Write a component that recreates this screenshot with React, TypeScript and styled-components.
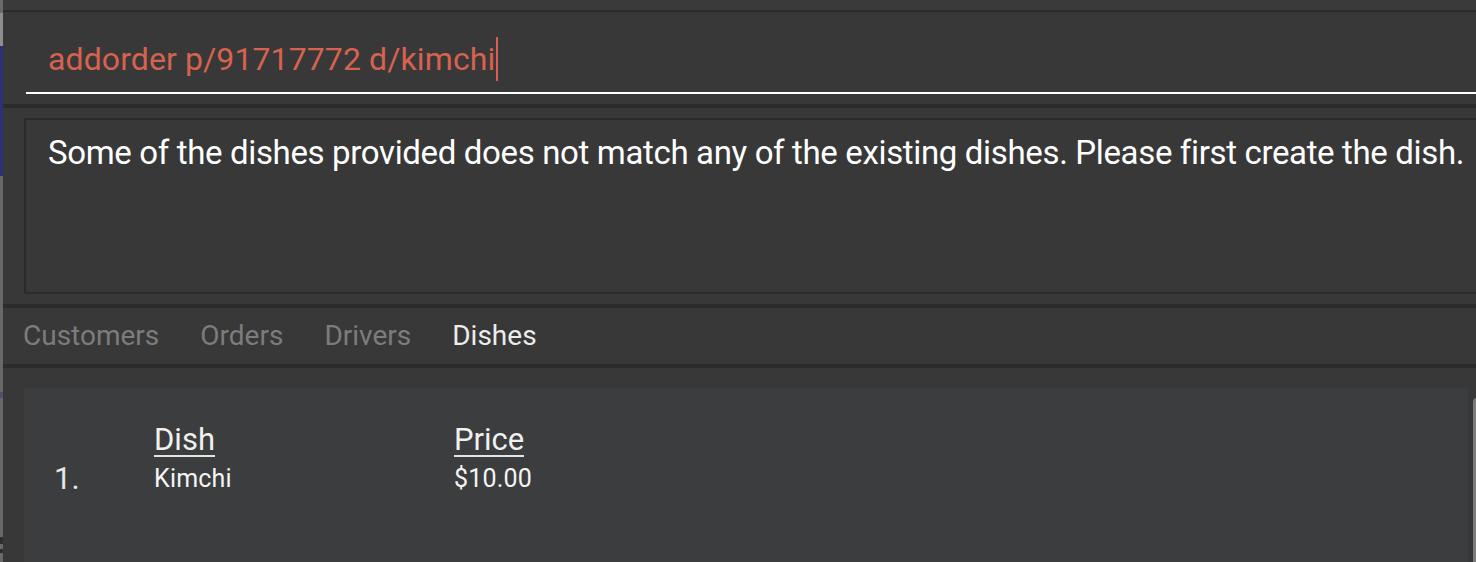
import React from "react";
import styled, { createGlobalStyle } from "styled-components";

const GlobalStyle = createGlobalStyle`
  html, body {
    margin: 0;
    padding: 0;
    background: #383838;
    overflow: hidden;
  }
  body {
    font-family: Roboto, "Liberation Sans", Arial, sans-serif;
  }
  #root {
    width: 1476px;
    height: 562px;
    overflow: hidden;
  }
`;

const Screen = styled.div`
  display: flex;
  width: 1476px;
  height: 562px;
  overflow: hidden;
`;

const DesktopEdge = styled.div`
  flex: 0 0 3px;
  background: linear-gradient(
    to bottom,
    #6a6a6a 0,
    #6a6a6a 13px,
    #8e8e8e 13px,
    #8e8e8e 46px,
    #27327a 46px,
    #27327a 176px,
    #686868 176px,
    #686868 392px,
    #4a5270 392px,
    #4a5270 398px,
    #686868 398px,
    #686868 537px,
    #2e2e2e 537px,
    #2e2e2e 544px,
    #686868 544px,
    #686868 549px,
    #2e2e2e 549px,
    #2e2e2e 553px,
    #686868 553px
  );
`;

const Window = styled.div`
  flex: 0 0 1490px;
  display: flex;
  flex-direction: column;
  background: #383838;
`;

const MenuEdge = styled.div`
  flex: 0 0 10px;
  background: #3a3a3a;
`;

const Divider = styled.div<{ $h: number }>`
  flex: 0 0 ${(p) => p.$h}px;
  background: #2b2b2b;
`;

const CommandSection = styled.div`
  padding: 25px 0 10px 23px;
`;

const CommandField = styled.div`
  display: flex;
  align-items: center;
  height: 44px;
  padding: 0 0 11px 22px;
  border-bottom: 2px solid #ffffff;
`;

const CommandText = styled.span`
  font-size: 32px;
  letter-spacing: 0.1px;
  line-height: 44px;
  color: #d6624f;
  white-space: pre;
`;

const Caret = styled.span`
  display: inline-block;
  width: 2px;
  height: 44px;
  margin-left: 1px;
  background: #d6624f;
`;

const ResultSection = styled.div`
  padding: 10px 0 10px 21px;
`;

const ResultBox = styled.div`
  box-sizing: border-box;
  height: 176px;
  border: 2px solid #2b2b2b;
  padding: 13px 0 0 22px;
`;

const ResultText = styled.div`
  font-size: 33px;
  letter-spacing: -0.35px;
  line-height: 40px;
  color: #ffffff;
  white-space: nowrap;
`;

const TabBar = styled.div`
  flex: 0 0 56px;
  display: flex;
  align-items: center;
  gap: 41px;
  padding-left: 20px;
`;

const Tab = styled.span<{ $active?: boolean }>`
  font-size: 28px;
  line-height: 36px;
  color: ${(p) => (p.$active ? "#ececec" : "#7c7c7c")};
`;

const ListArea = styled.div`
  flex: 1;
  display: flex;
  padding: 20px 12px 0 21px;
  min-height: 0;
`;

const Card = styled.div`
  flex: 1;
  display: flex;
  align-items: flex-start;
  min-height: 220px;
  background: #3c3d3f;
`;

const Scrollbar = styled.div`
  flex: 0 0 8px;
  margin: 10px 0 0 5px;
  background: #7b7b7b;
  border-radius: 4px 4px 0 0;
`;

const IndexCell = styled.div`
  box-sizing: border-box;
  flex: 0 0 130px;
  padding: 73px 0 0 30px;
  font-size: 31px;
  line-height: 36px;
  color: #e6e6e6;
`;

const Fields = styled.div`
  display: grid;
  grid-template-columns: 300px auto;
  align-items: start;
  padding-top: 36px;
`;

const HeaderCell = styled.span`
  justify-self: start;
  font-size: 31px;
  line-height: 31px;
  color: #f0f0f0;
  border-bottom: 2px solid #e4e4e4;
`;

const ValueCell = styled.span`
  margin-top: 6px;
  font-size: 25px;
  letter-spacing: 0.2px;
  line-height: 32px;
  color: #f4f4f4;
`;

export default function App() {
  return (
    <>
      <GlobalStyle />
      <Screen>
        <DesktopEdge />
        <Window>
          <MenuEdge />
          <Divider $h={2} />
          <CommandSection>
            <CommandField>
              <CommandText>addorder p/91717772 d/kimchi</CommandText>
              <Caret />
            </CommandField>
          </CommandSection>
          <Divider $h={4} />
          <ResultSection>
            <ResultBox>
              <ResultText>
                Some of the dishes provided does not match any of the existing dishes. Please first create the dish.
              </ResultText>
            </ResultBox>
          </ResultSection>
          <Divider $h={4} />
          <TabBar>
            <Tab>Customers</Tab>
            <Tab>Orders</Tab>
            <Tab>Drivers</Tab>
            <Tab $active>Dishes</Tab>
          </TabBar>
          <Divider $h={4} />
          <ListArea>
            <Card>
              <IndexCell>1.</IndexCell>
              <Fields>
                <HeaderCell>Dish</HeaderCell>
                <HeaderCell>Price</HeaderCell>
                <ValueCell>Kimchi</ValueCell>
                <ValueCell>$10.00</ValueCell>
              </Fields>
            </Card>
            <Scrollbar />
          </ListArea>
        </Window>
      </Screen>
    </>
  );
}
